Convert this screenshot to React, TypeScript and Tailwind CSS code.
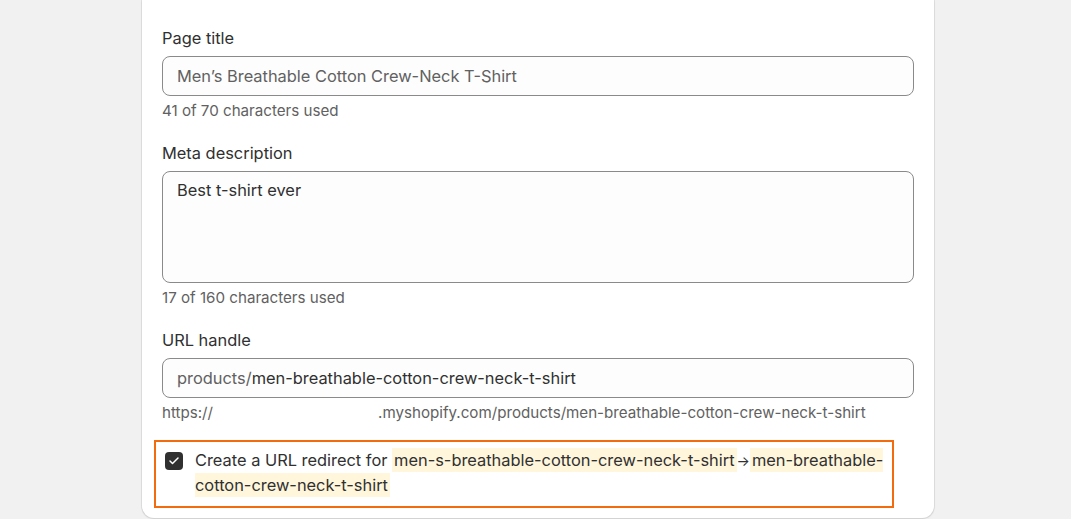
import { Check } from "lucide-react";

const font = { fontFamily: "Inter, 'Noto Sans', sans-serif" };

function Field({
  label,
  children,
  help,
}: {
  label: string;
  children: React.ReactNode;
  help: React.ReactNode;
}) {
  return (
    <div className="flex flex-col">
      <label className="text-[16.4px] leading-[25px] text-[#303030]">{label}</label>
      <div className="mt-[5px]">{children}</div>
      <p className="mt-[5px] text-[15.15px] leading-5 text-[#616161]">{help}</p>
    </div>
  );
}

export default function App() {
  return (
    <div className="h-[519px] w-full overflow-hidden bg-[#f1f1f1]" style={font}>
      <div className="ml-[142px] w-[792px] rounded-b-[12px] bg-white px-5 pb-[10px] pt-[26px] shadow-[0_0_0_1px_rgba(0,0,0,0.07),0_1px_2px_rgba(0,0,0,0.08)]">
        <div className="flex flex-col gap-[20px]">
          {/* Page title */}
          <Field label="Page title" help="41 of 70 characters used">
            <div className="flex h-10 items-center rounded-lg border border-[#8a8a8a] bg-[#fdfdfd] px-[14px] text-[16.4px] text-[#616161]">
              Men’s Breathable Cotton Crew-Neck T-Shirt
            </div>
          </Field>

          {/* Meta description */}
          <Field label="Meta description" help="17 of 160 characters used">
            <div className="h-[112px] rounded-lg border border-[#8a8a8a] bg-[#fdfdfd] px-[14px] pt-[6px] text-[16.4px] leading-[25px] text-[#303030]">
              Best t-shirt ever
            </div>
          </Field>

          {/* URL handle */}
          <Field
            label="URL handle"
            help={
              <>
                https://<span className="inline-block w-[165px]" />
                .myshopify.com/products/men-breathable-cotton-crew-neck-t-shirt
              </>
            }
          >
            <div className="flex h-10 items-center rounded-lg border border-[#8a8a8a] bg-[#fdfdfd] px-[14px] text-[16.4px]">
              <span className="text-[#616161]">products/</span>
              <span className="text-[#303030]">men-breathable-cotton-crew-neck-t-shirt</span>
            </div>
          </Field>
        </div>

        {/* Redirect checkbox */}
        <div className="-ml-2 mr-[20px] mt-[17px] flex items-start gap-3 border-2 border-[#f26b0f] pb-[8px] pl-[9px] pr-[2px] pt-[6px]">
          <span className="mt-[4px] flex h-[18px] w-[18px] shrink-0 items-center justify-center rounded-[4px] bg-[#303030]">
            <Check className="h-3 w-3 text-white" strokeWidth={3} />
          </span>
          <p className="text-[16.4px] leading-[25px] text-[#303030]">
            Create a URL redirect for{" "}
            <span className="bg-[#fff6dc] px-[2px] py-[2px]">men-s-breathable-cotton-crew-neck-t-shirt</span>
            <span className="text-[14px]">→</span>
            <span className="bg-[#fff6dc] px-[2px] py-[2px]">men-breathable-cotton-crew-neck-t-shirt</span>
          </p>
        </div>
      </div>
    </div>
  );
}
